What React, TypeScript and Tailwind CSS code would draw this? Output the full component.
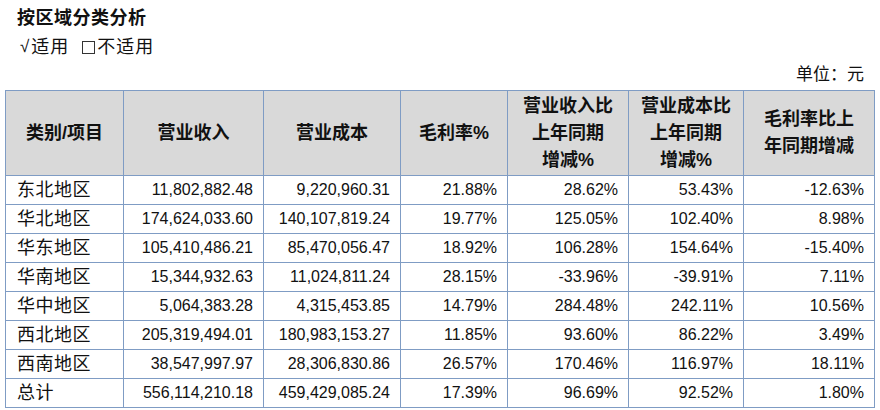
import React from "react";

const rows: string[][] = [
  ["东北地区", "11,802,882.48", "9,220,960.31", "21.88%", "28.62%", "53.43%", "-12.63%"],
  ["华北地区", "174,624,033.60", "140,107,819.24", "19.77%", "125.05%", "102.40%", "8.98%"],
  ["华东地区", "105,410,486.21", "85,470,056.47", "18.92%", "106.28%", "154.64%", "-15.40%"],
  ["华南地区", "15,344,932.63", "11,024,811.24", "28.15%", "-33.96%", "-39.91%", "7.11%"],
  ["华中地区", "5,064,383.28", "4,315,453.85", "14.79%", "284.48%", "242.11%", "10.56%"],
  ["西北地区", "205,319,494.01", "180,983,153.27", "11.85%", "93.60%", "86.22%", "3.49%"],
  ["西南地区", "38,547,997.97", "28,306,830.86", "26.57%", "170.46%", "116.97%", "18.11%"],
  ["总计", "556,114,210.18", "459,429,085.24", "17.39%", "96.69%", "92.52%", "1.80%"],
];

const widths = [118, 140, 137, 107, 121, 115, 131];

export default function App() {
  return (
    <div
      className="w-[880px] h-[410px] bg-white text-[#111] overflow-hidden"
      style={{ fontFamily: '"Liberation Sans", "Noto Sans CJK SC", sans-serif' }}
    >
      <div className="pl-[17px] pt-[6px] text-[18px] font-bold leading-[24px] tracking-[0.5px]">
        按区域分类分析
      </div>
      <div className="pl-[20px] pt-[5px] text-[18px] leading-[24px] flex items-center tracking-[1px]">
        <span className="text-[17px] mr-[1px]">√</span>
        <span>适用</span>
        <span className="ml-[13px] inline-block w-[13px] h-[13px] border border-[#333] mr-[2px]" />
        <span>不适用</span>
      </div>
      <div className="pr-[16px] pt-[4px] text-[17px] leading-[24px] text-right">单位：元</div>
      <div className="pl-[5px] pt-[3px]">
        <table className="table-fixed border-collapse w-[869px]">
          <colgroup>
            {widths.map((w, i) => (
              <col key={i} style={{ width: w }} />
            ))}
          </colgroup>
          <thead>
            <tr className="h-[85px] bg-[#d9d9d9] text-[18px] font-bold leading-[27px]">
              <th className="border border-[#7f9cc4] text-center font-bold">类别/项目</th>
              <th className="border border-[#7f9cc4] text-center font-bold">营业收入</th>
              <th className="border border-[#7f9cc4] text-center font-bold">营业成本</th>
              <th className="border border-[#7f9cc4] text-center font-bold">毛利率%</th>
              <th className="border border-[#7f9cc4] text-center font-bold">
                营业收入比
                <br />
                上年同期
                <br />
                增减%
              </th>
              <th className="border border-[#7f9cc4] text-center font-bold">
                营业成本比
                <br />
                上年同期
                <br />
                增减%
              </th>
              <th className="border border-[#7f9cc4] text-center font-bold">
                毛利率比上
                <br />
                年同期增减
              </th>
            </tr>
          </thead>
          <tbody>
            {rows.map((r, ri) => (
              <tr key={ri} className="h-[29px]">
                {r.map((c, ci) =>
                  ci === 0 ? (
                    <td
                      key={ci}
                      className="border border-[#7f9cc4] pl-[11px] text-[18px] leading-[20px] tracking-[0.5px] p-0"
                    >
                      {c}
                    </td>
                  ) : (
                    <td
                      key={ci}
                      className="border border-[#7f9cc4] pr-[10px] text-right text-[16px] leading-[20px] p-0"
                    >
                      {c}
                    </td>
                  )
                )}
              </tr>
            ))}
          </tbody>
        </table>
      </div>
    </div>
  );
}
